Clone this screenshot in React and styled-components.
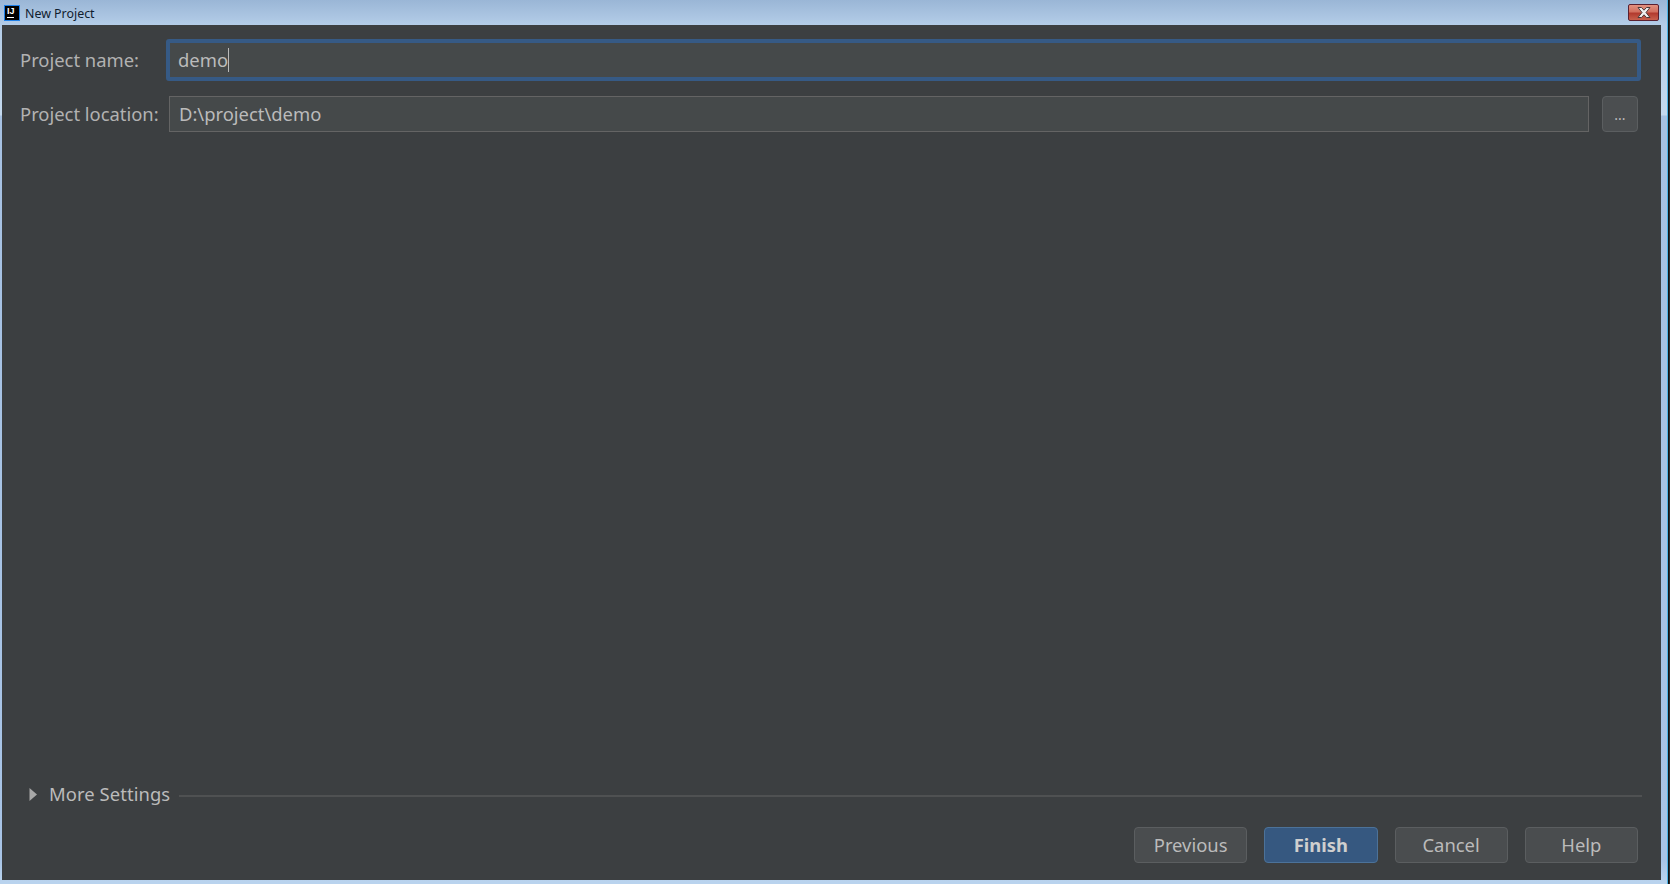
import React from "react"
import styled, { createGlobalStyle } from "styled-components"

const GlobalStyle = createGlobalStyle`
  html, body {
    margin: 0;
    padding: 0;
    overflow: hidden;
    background: #1e1f20;
  }
  * {
    box-sizing: border-box;
  }
`

const App = () => {
  return (
    <>
      <GlobalStyle />
      <Desktop>
        <Window>
          <TitleBar>
            <IdeIcon>
              <IdeLetters>IJ</IdeLetters>
              <IdeBar />
            </IdeIcon>
            <TitleText>New Project</TitleText>
            <CloseButton>
              <svg width="18" height="13" viewBox="0 0 18 13">
                <path
                  d="M3 1.5h3.5L9 4.2l2.5-2.7H15l-4 5 4 5h-3.5L9 8.8l-2.5 2.7H3l4-5z"
                  fill="#f0f0f0"
                  stroke="#4a3a3a"
                  strokeWidth="1"
                />
              </svg>
            </CloseButton>
          </TitleBar>
          <Client>
            <Form>
              <NameRow>
                <Label>Project name:</Label>
                <FocusedField>
                  demo
                  <Caret />
                </FocusedField>
              </NameRow>
              <LocationRow>
                <Label>Project location:</Label>
                <Field>D:\project\demo</Field>
                <BrowseButton>...</BrowseButton>
              </LocationRow>
            </Form>
            <MoreSettings>
              <svg width="9" height="13" viewBox="0 0 9 13">
                <path d="M0.5 0v13L8 6.5z" fill="#a8a8a8" />
              </svg>
              <MoreLabel>More Settings</MoreLabel>
              <Divider />
            </MoreSettings>
            <Buttons>
              <DialogButton>Previous</DialogButton>
              <DialogButton primary>Finish</DialogButton>
              <DialogButton>Cancel</DialogButton>
              <DialogButton>Help</DialogButton>
            </Buttons>
          </Client>
        </Window>
        <DesktopEdge />
      </Desktop>
    </>
  )
}

export default App

const Desktop = styled.div`
  display: flex;
  width: 1670px;
  height: 884px;
  font-family: "Noto Sans", "Open Sans", sans-serif;
`
const DesktopEdge = styled.div`
  width: 2px;
  background: linear-gradient(90deg, #111213 50%, #2b2c2d 50%);
`
const Window = styled.div`
  flex: 1;
  display: flex;
  flex-direction: column;
  padding: 0 6px 4px 2px;
  border-right: 1px solid #4cb4e6;
  background: linear-gradient(
    180deg,
    #9ab6d6 0,
    #b4cde8 25px,
    #c4d9ee 115px,
    #a6c1e2 116px,
    #a8c4e6 860px,
    #b9d3ee 881px
  );
`
const TitleBar = styled.div`
  height: 25px;
  display: flex;
  align-items: center;
  margin-left: -2px;
  padding-left: 4px;
`
const IdeIcon = styled.div`
  width: 16px;
  height: 16px;
  border: 1px solid #1f80e8;
  background: #000;
  flex-shrink: 0;
`
const IdeLetters = styled.span`
  display: block;
  color: #fff;
  font-family: "Liberation Sans", sans-serif;
  font-weight: 700;
  font-size: 9px;
  line-height: 9px;
  margin: 1px 0 0 2px;
`
const IdeBar = styled.div`
  width: 7px;
  height: 1px;
  margin: 1px 0 0 2px;
  background: #fff;
`
const TitleText = styled.span`
  margin-left: 5px;
  padding-top: 2px;
  font-size: 12.4px;
  color: #10202f;
`
const CloseButton = styled.div`
  margin-left: auto;
  margin-right: 2px;
  width: 31px;
  height: 17px;
  display: flex;
  align-items: center;
  justify-content: center;
  border: 1px solid #5a2030;
  border-radius: 2px;
  background: linear-gradient(180deg, #e2917f 0%, #d2705f 45%, #b23a2e 55%, #c8604c 100%);
`
const Client = styled.div`
  flex: 1;
  display: flex;
  flex-direction: column;
  background: #3c3f41;
  color: #bbbbbb;
  font-size: 18.4px;
`
const Form = styled.div`
  flex: 1;
  padding: 14px 20px 0 18px;
`
const NameRow = styled.div`
  display: flex;
  align-items: center;
  height: 42px;
`
const LocationRow = styled.div`
  display: flex;
  align-items: center;
  height: 36px;
  margin-top: 15px;
`
const Label = styled.label`
  width: 149px;
  flex-shrink: 0;
  padding-bottom: 2px;
  color: #b2b2b2;
`
const FocusedField = styled.div`
  flex: 1;
  height: 42px;
  margin-left: -3px;
  padding: 0 0 2px 8px;
  display: flex;
  align-items: center;
  border: 4px solid #365a85;
  border-radius: 3px;
  background: #45494a;
`
const Caret = styled.span`
  width: 1px;
  height: 24px;
  margin-top: 2px;
  background: #bbbbbb;
`
const Field = styled.div`
  flex: 1;
  height: 36px;
  padding: 0 0 2px 9px;
  display: flex;
  align-items: center;
  border: 1px solid #646464;
  background: #45494a;
`
const BrowseButton = styled.button`
  width: 36px;
  height: 36px;
  margin-left: 13px;
  margin-right: 3px;
  padding: 0;
  border: 1px solid #5b5e60;
  border-radius: 4px;
  background: #4b4e50;
  color: #bbbbbb;
  font: inherit;
  font-size: 14px;
`
const MoreSettings = styled.div`
  display: flex;
  align-items: center;
  height: 24px;
  margin: -1px 19px 1px 27px;
`
const MoreLabel = styled.span`
  margin-left: 11px;
  padding-bottom: 2px;
  letter-spacing: 0.08px;
  white-space: nowrap;
`
const Divider = styled.div`
  flex: 1;
  height: 2px;
  margin: 4px 0 0 9px;
  background: #4f5152;
`
const Buttons = styled.div`
  display: flex;
  justify-content: flex-end;
  gap: 17px;
  padding: 20px 23px 17px 0;
`
const DialogButton = styled.button`
  width: 113.25px;
  height: 36px;
  padding: 0 0 2px;
  border: 1px solid ${props => (props.primary ? "#4c7299" : "#5b5e60")};
  border-radius: 4px;
  background: ${props => (props.primary ? "#365880" : "#4a4d4f")};
  color: ${props => (props.primary ? "#cfcfcf" : "#bbbbbb")};
  font: inherit;
  font-weight: ${props => (props.primary ? 700 : 400)};
`
